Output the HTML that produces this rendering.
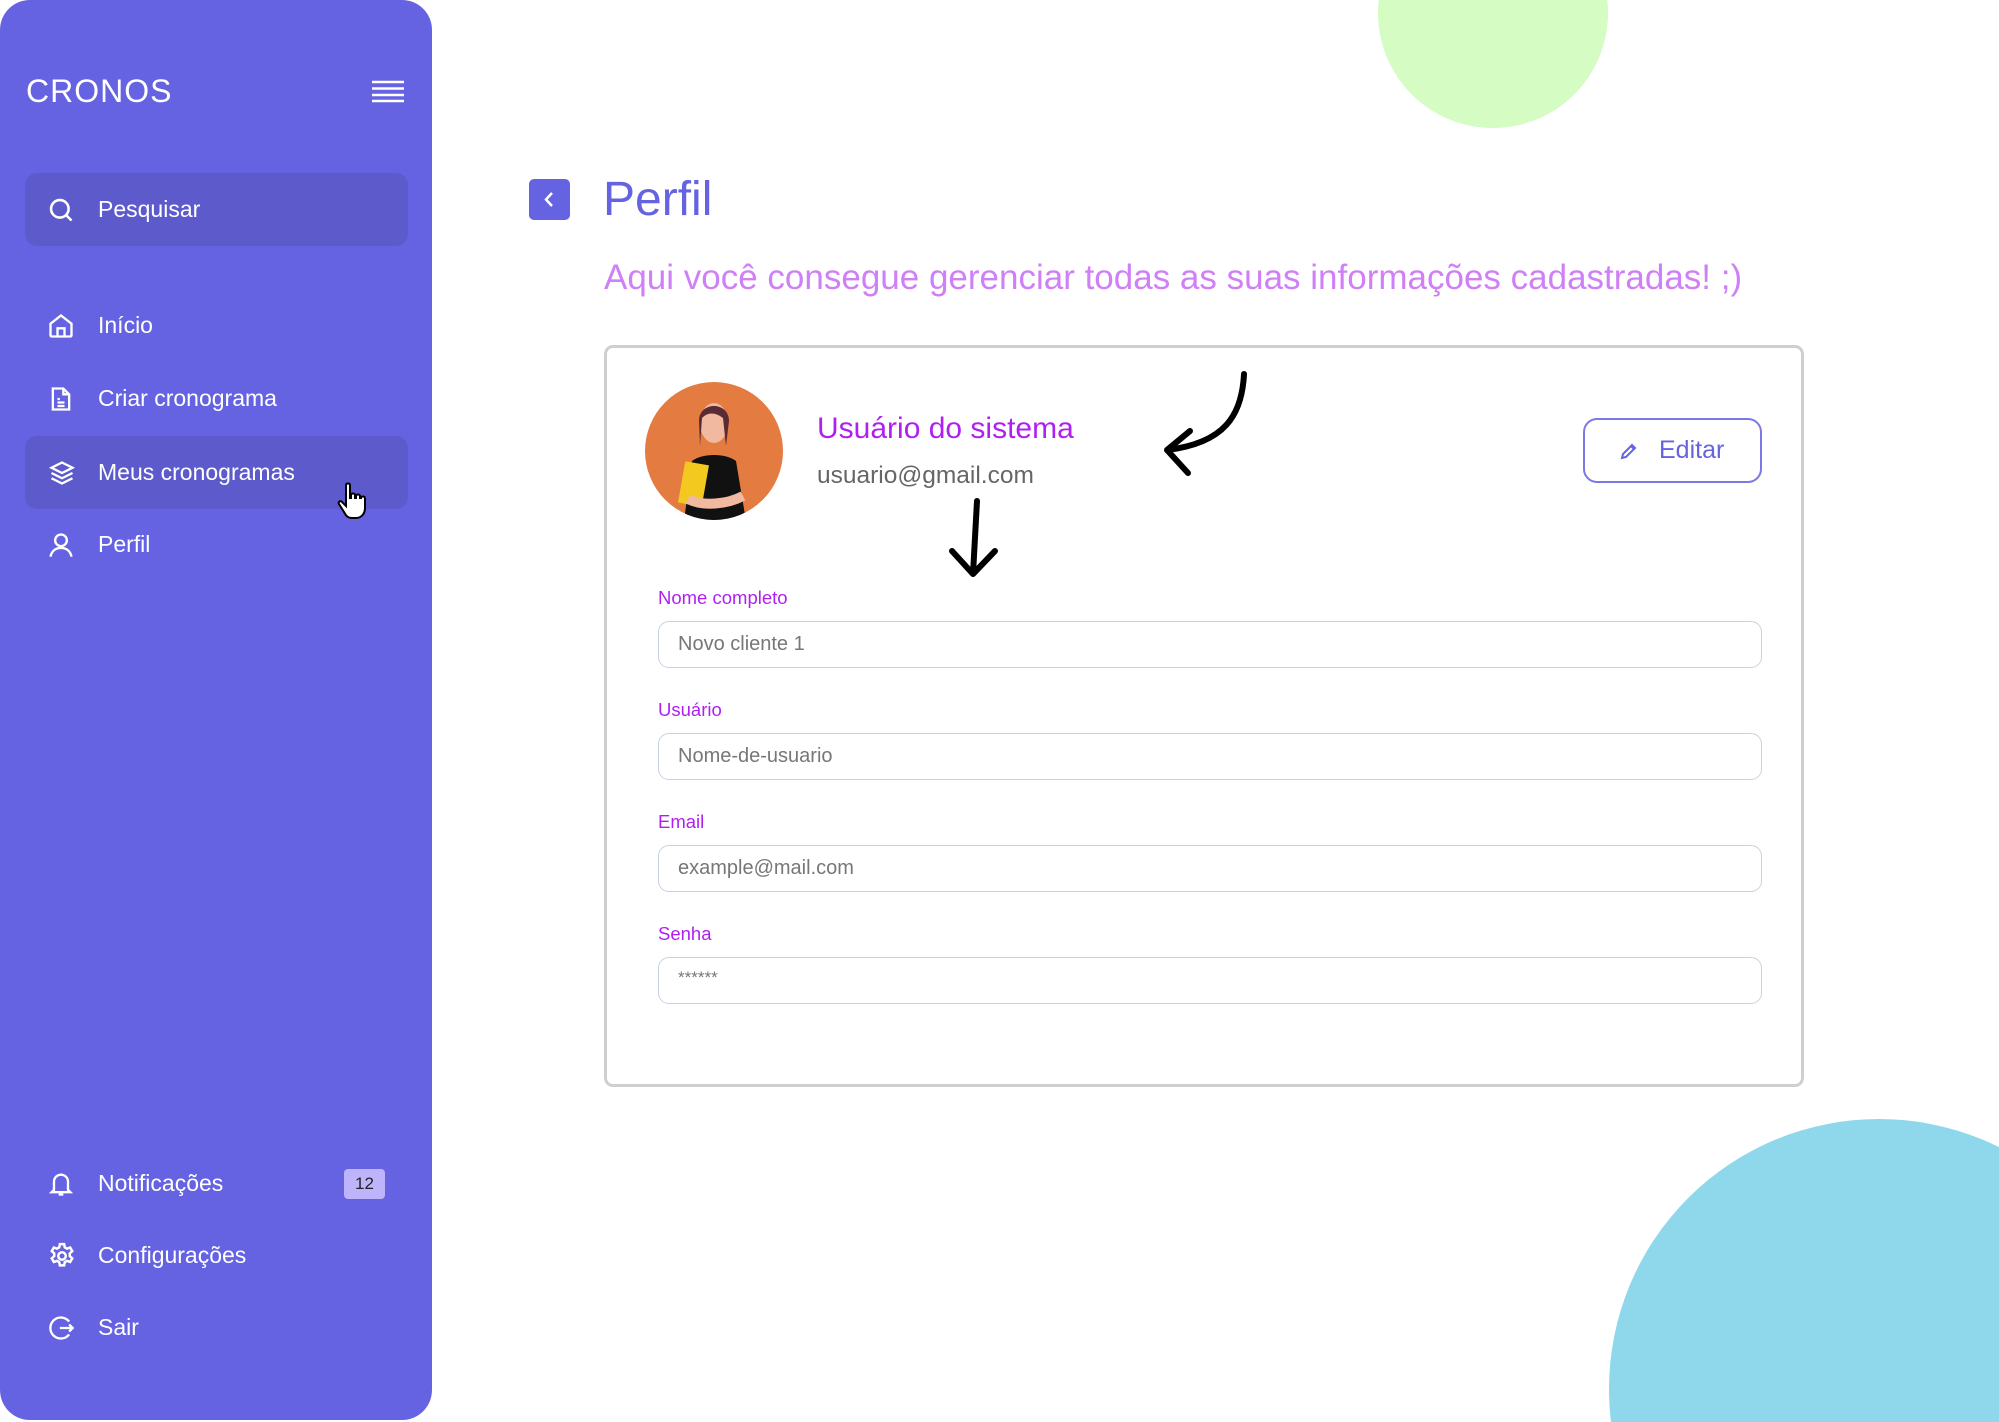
<!DOCTYPE html>
<html><head><meta charset="utf-8"><style>
*{margin:0;padding:0;box-sizing:border-box}
html,body{width:1999px;height:1422px;overflow:hidden}
body{background:#fff;font-family:"Liberation Sans",sans-serif}
#w{position:relative;width:1999px;height:1422px;overflow:hidden}
.abs{position:absolute}
.side{left:0;top:0;width:432px;height:1420px;background:#6563e1;border-radius:30px}
.item{position:absolute;left:25px;width:383px;height:73px;color:#fff;font-size:23px;display:flex;align-items:center}
.item svg{position:absolute;left:22px}
.item span{position:absolute;left:73px}
.hl{background:#5d5bcc;border-radius:12px}
.lbl{position:absolute;left:658px;color:#b01ff2;font-size:18.5px}
.inp{position:absolute;left:658px;width:1104px;height:47px;border:1.5px solid #c9d1e4;border-radius:11px;color:#777;font-size:20px;padding-left:19px;display:flex;align-items:center}
</style></head><body><div id="w">
<svg class="abs" style="left:1378px;top:0" width="230" height="128"><circle cx="115" cy="13" r="115" fill="#d4fcc3"/></svg>
<svg class="abs" style="left:1609px;top:1119px" width="390" height="303"><circle cx="270" cy="270" r="270" fill="#8fd8ec"/></svg>

<div class="abs side"></div>
<div class="abs" style="left:26px;top:74px;color:#fff;font-size:32px;letter-spacing:1px;line-height:34px">CRONOS</div>
<svg class="abs" style="left:372px;top:80px" width="32" height="23"><g stroke="#fff" stroke-width="2.5"><line x1="0" y1="2" x2="32" y2="2"/><line x1="0" y1="8.5" x2="32" y2="8.5"/><line x1="0" y1="15" x2="32" y2="15"/><line x1="0" y1="21" x2="32" y2="21"/></g></svg>

<div class="item hl" style="top:173px"><svg width="28" height="28" viewBox="0 0 24 24" fill="none" stroke="#fff" stroke-width="2.2"><circle cx="11" cy="11" r="7.5"/><line x1="16.5" y1="16.5" x2="21" y2="21"/></svg><span>Pesquisar</span></div>
<div class="item" style="top:289px"><svg width="28" height="28" viewBox="0 0 24 24" fill="none" stroke="#fff" stroke-width="2"><path d="M3 10L12 3l9 7v10a1 1 0 0 1-1 1H4a1 1 0 0 1-1-1z"/><path d="M9 21v-7h6v7"/></svg><span>Início</span></div>
<div class="item" style="top:362px"><svg width="28" height="28" viewBox="0 0 24 24" fill="none" stroke="#fff" stroke-width="2"><path d="M5 3h9l5 5v13H5z"/><path d="M14 3v5h5M9 12h2M9 15h6M9 18h6"/></svg><span>Criar cronograma</span></div>
<div class="item hl" style="top:436px"><svg width="30" height="28" viewBox="0 0 24 24" fill="none" stroke="#fff" stroke-width="2"><path d="M12 3l9 4.5-9 4.5-9-4.5z"/><path d="M3 12l9 4.5 9-4.5M3 16.5l9 4.5 9-4.5"/></svg><span>Meus cronogramas</span></div>
<div class="item" style="top:508px"><svg width="28" height="28" viewBox="0 0 24 24" fill="none" stroke="#fff" stroke-width="2"><circle cx="12" cy="8" r="5"/><path d="M3 22c1-5 4.5-7.5 9-7.5s8 2.5 9 7.5"/></svg><span>Perfil</span></div>
<svg class="abs" style="left:336px;top:482px" width="34" height="38" viewBox="0 0 17 19"><path d="M5 1.5c0-1 2-1 2 0V8h.5V6.5c0-1 2-1 2 0V8h.5V7c0-1 2-1 2 0v1h.5c0-1 2-1 2 0v5c0 3-2 5-4.5 5H8c-2 0-3-1-4-3L1.5 11c-.7-1 .8-2 1.5-1L5 12z" fill="#fff" stroke="#000" stroke-width="1"/></svg>

<div class="item" style="top:1147px"><svg width="28" height="30" viewBox="0 0 24 24" fill="none" stroke="#fff" stroke-width="2"><path d="M6 17V10a6 6 0 0 1 12 0v7l2 2H4z"/><path d="M10 21h4"/></svg><span>Notificações</span></div>
<div class="abs" style="left:344px;top:1169px;width:41px;height:30px;background:#bdb4fb;border-radius:4px;color:#222;font-size:17px;display:flex;align-items:center;justify-content:center">12</div>
<div class="item" style="top:1219px"><svg width="30" height="30" viewBox="0 0 24 24" fill="none" stroke="#fff" stroke-width="2"><circle cx="12" cy="12" r="3"/><path d="M10.3 2.5h3.4l.5 2.6 1.8 1 2.5-.9 1.7 2.9-2 1.8v2.2l2 1.8-1.7 2.9-2.5-.9-1.8 1-.5 2.6h-3.4l-.5-2.6-1.8-1-2.5.9-1.7-2.9 2-1.8v-2.2l-2-1.8 1.7-2.9 2.5.9 1.8-1z"/></svg><span>Configurações</span></div>
<div class="item" style="top:1291px"><svg width="28" height="30" viewBox="0 0 24 24" fill="none" stroke="#fff" stroke-width="2"><path d="M19 6.5A9 9 0 1 0 19 17.5"/><path d="M11 12h11M19 9l3 3-3 3"/></svg><span>Sair</span></div>

<div class="abs" style="left:529px;top:179px;width:41px;height:41px;background:#6563e1;border-radius:5px"><svg width="41" height="41"><path d="M23 14l-6 6.5 6 6.5" fill="none" stroke="#fff" stroke-width="2.5"/></svg></div>
<div class="abs" style="left:603px;top:170px;color:#6563e1;font-size:48px;line-height:60px">Perfil</div>
<div class="abs" style="left:604px;top:257px;color:#d080f6;font-size:35px;line-height:42px;white-space:nowrap">Aqui você consegue gerenciar todas as suas informações cadastradas! ;)</div>

<div class="abs" style="left:604px;top:345px;width:1200px;height:742px;border:3px solid #cfcfcf;border-radius:9px"></div>
<svg class="abs" style="left:644px;top:381px" width="140" height="140"><defs><clipPath id="c"><circle cx="70" cy="70" r="69"/></clipPath></defs><circle cx="70" cy="70" r="69" fill="#e47b41"/><g clip-path="url(#c)"><path d="M40 140l8-60c10-8 34-8 44 0l10 60z" fill="#111"/><ellipse cx="70" cy="42" rx="14" ry="20" fill="#f0b9a0"/><path d="M55 40c0-20 30-20 30 0l-3 25-3-28c-8-6-15-6-21 0l-2 28z" fill="#5a2a35"/><rect x="38" y="82" width="24" height="42" fill="#f4c91f" transform="rotate(10 50 100)"/><path d="M44 118c15 8 40 5 55-3" stroke="#f0b9a0" stroke-width="10" fill="none"/></g></svg>
<div class="abs" style="left:817px;top:411px;color:#b01ff2;font-size:30px;line-height:36px">Usuário do sistema</div>
<div class="abs" style="left:817px;top:461px;color:#666;font-size:24.5px;line-height:30px">usuario@gmail.com</div>
<svg class="abs" style="left:1150px;top:365px" width="110" height="120"><path d="M94 9C92 50 75 78 17 85M17 85L40 66M17 85L38 108" fill="none" stroke="#000" stroke-width="6" stroke-linecap="round" stroke-linejoin="round"/></svg>
<svg class="abs" style="left:940px;top:495px" width="70" height="90"><path d="M37 6L33 79M33 79L12 56M33 79L55 56" fill="none" stroke="#000" stroke-width="6" stroke-linecap="round" stroke-linejoin="round"/></svg>

<div class="abs" style="left:1583px;top:418px;width:179px;height:65px;border:2px solid #7b79e8;border-radius:14px;color:#6563e1;font-size:25px;display:flex;align-items:center;padding-left:74px">Editar</div>
<svg class="abs" style="left:1619px;top:441px" width="20" height="20" viewBox="0 0 20 20"><path d="M3 17l1-4 9-9 3 3-9 9z M12 5l3 3" fill="none" stroke="#6563e1" stroke-width="2"/></svg>

<div class="lbl" style="top:587px">Nome completo</div>
<div class="inp" style="top:621px">Novo cliente 1</div>
<div class="lbl" style="top:699px">Usuário</div>
<div class="inp" style="top:733px">Nome-de-usuario</div>
<div class="lbl" style="top:811px">Email</div>
<div class="inp" style="top:845px">example@mail.com</div>
<div class="lbl" style="top:923px">Senha</div>
<div class="inp" style="top:957px;font-size:17px;align-items:flex-start;padding-top:10px">******</div>
</div></body></html>
